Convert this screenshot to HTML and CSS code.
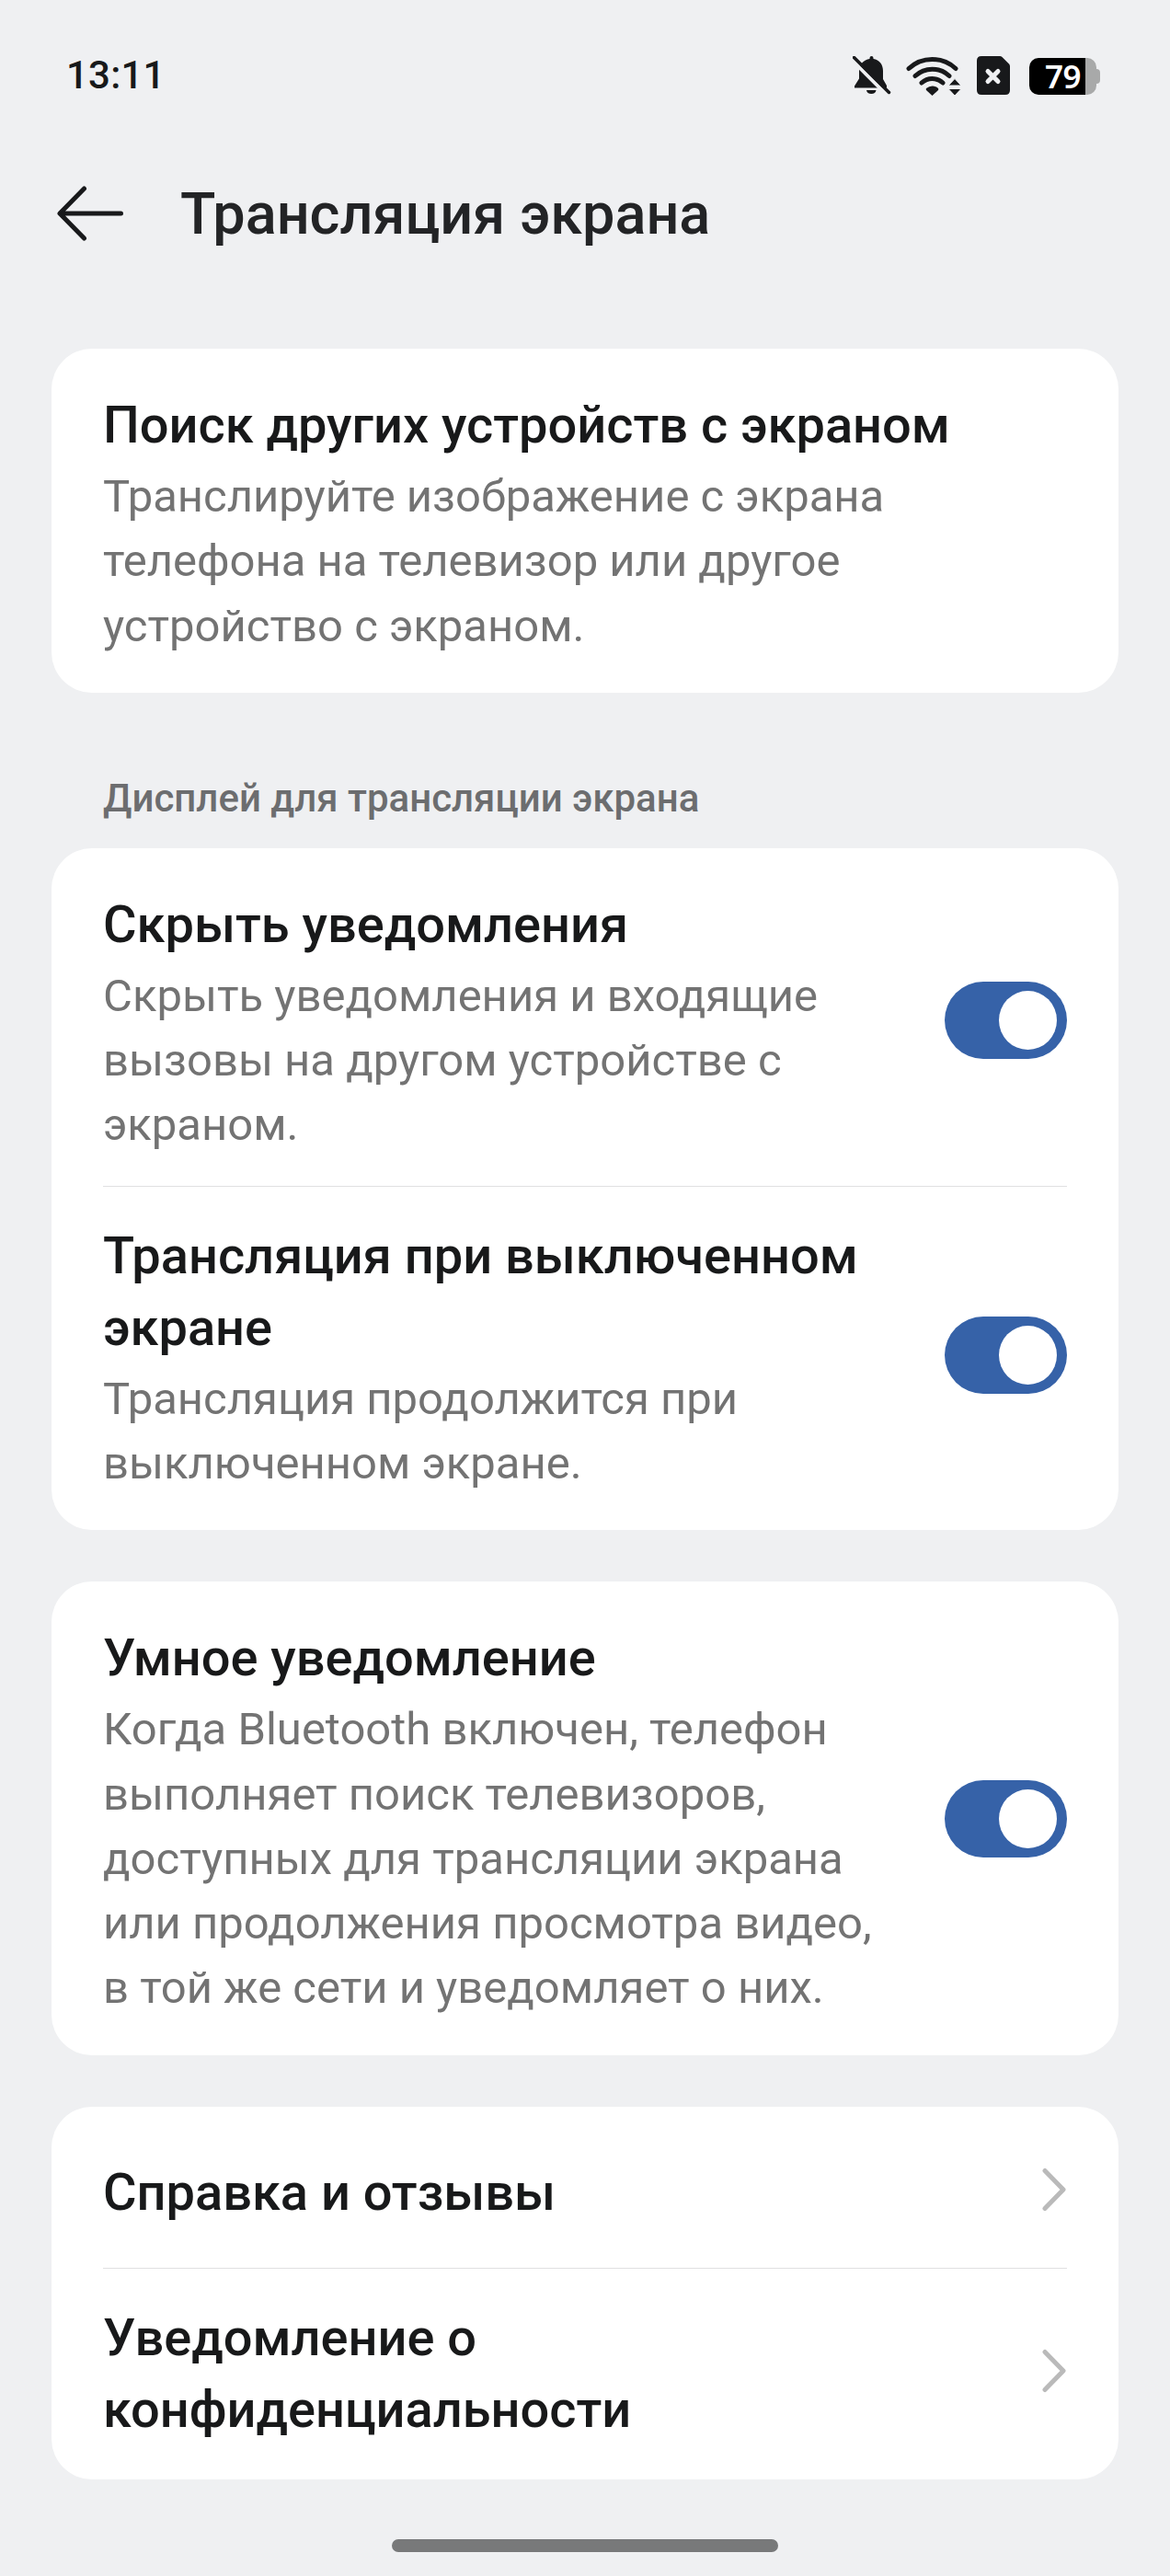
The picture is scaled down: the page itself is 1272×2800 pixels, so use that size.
FILE: index.html
```html
<!DOCTYPE html>
<html lang="ru">
<head>
    <meta charset="UTF-8">
    <title>Трансляция экрана</title>
    <link rel="stylesheet" href="styles.css">
</head>
<body>
    <div class="status-bar">
        <span class="time">13:11</span>
        <div class="status-icons">
            <svg class="icon-bell" width="42" height="42" viewBox="0 0 42 42">
                <path d="M18.500 3V2a1.500 1.500 0 0 1 4 0v1C29 4 33 9 33 16v9l4 7v2.500H2v-2l5-8v-8C7 9 12 4 18.500 3z" fill="#18191b"/>
                <path d="M15 37h10.500a5.300 4.500 0 0 1-10.500 0z" fill="#18191b"/>
                <path d="M-3 2L37 42" stroke="#eff0f2" stroke-width="4"/>
                <path d="M1.500 1.500L39.500 39.500" stroke="#18191b" stroke-width="3.500" stroke-linecap="round"/>
            </svg>
            <svg class="icon-wifi" width="60" height="43" viewBox="0 0 60 43">
                <g fill="none" stroke="#18191b" stroke-width="5" stroke-linecap="round">
                    <path d="M3 13.500a37.500 37.500 0 0 1 51 0"/>
                    <path d="M10 21.500a27 27 0 0 1 37 0"/>
                    <path d="M17 29a17 17 0 0 1 23 0"/>
                </g>
                <path d="M22 35q6.500-5 13 0q.500 1 0 2l-6.500 6l-6.500-6q-.500-1 0-2z" fill="#18191b"/>
                <path d="M53 24.500l7 7.500H46zM53 43l-7-7.500h14z" fill="#18191b" stroke="#eff0f2" stroke-width="1"/>
            </svg>
            <svg class="icon-sim" width="36" height="42" viewBox="0 0 36 42">
                <path d="M5 0h20q1.500 0 2.500 1l7.500 7.500q1 1 1 2.500v26q0 5-5 5H5q-5 0-5-5V5q0-5 5-5z" fill="#18191b"/>
                <path d="M12 16.500l11 11M23 16.500l-11 11" stroke="#eff0f2" stroke-width="5" stroke-linecap="round"/>
            </svg>
            <div class="battery">
                <span class="battery-level">79</span>
                <span class="battery-cap"></span>
            </div>
        </div>
    </div>

    <div class="header">
        <svg class="back-arrow" width="72" height="60" viewBox="0 0 72 60">
            <path d="M69.500 30H4M29.500 3L3 30l26.500 27" fill="none" stroke="#18191b" stroke-width="5" stroke-linecap="round" stroke-linejoin="round"/>
        </svg>
        <h1>Трансляция экрана</h1>
    </div>

    <div class="card">
        <div class="item item-last">
            <div class="item-text">
                <h2>Поиск других устройств с экраном</h2>
                <p>Транслируйте изображение с экрана<br>телефона на телевизор или другое<br>устройство с экраном.</p>
            </div>
        </div>
    </div>

    <div class="section-title">Дисплей для трансляции экрана</div>

    <div class="card">
        <div class="item">
            <div class="item-text">
                <h2>Скрыть уведомления</h2>
                <p>Скрыть уведомления и входящие<br>вызовы на другом устройстве с<br>экраном.</p>
            </div>
            <div class="toggle"><span class="knob"></span></div>
        </div>
        <div class="item item-last">
            <div class="item-text">
                <h2>Трансляция при выключенном<br>экране</h2>
                <p>Трансляция продолжится при<br>выключенном экране.</p>
            </div>
            <div class="toggle"><span class="knob"></span></div>
        </div>
    </div>

    <div class="card">
        <div class="item item-last">
            <div class="item-text">
                <h2>Умное уведомление</h2>
                <p>Когда Bluetooth включен, телефон<br>выполняет поиск телевизоров,<br>доступных для трансляции экрана<br>или продолжения просмотра видео,<br>в той же сети и уведомляет о них.</p>
            </div>
            <div class="toggle"><span class="knob"></span></div>
        </div>
    </div>

    <div class="card">
        <div class="item link-item">
            <h2>Справка и отзывы</h2>
            <svg class="chevron" width="26" height="48" viewBox="0 0 26 48">
                <path d="M3 3.500l20 20.500L3 44.500" fill="none" stroke="#bababa" stroke-width="5" stroke-linecap="round" stroke-linejoin="round"/>
            </svg>
        </div>
        <div class="item link-item item-last">
            <h2>Уведомление о<br>конфиденциальности</h2>
            <svg class="chevron" width="26" height="48" viewBox="0 0 26 48">
                <path d="M3 3.500l20 20.500L3 44.500" fill="none" stroke="#bababa" stroke-width="5" stroke-linecap="round" stroke-linejoin="round"/>
            </svg>
        </div>
    </div>

    <div class="home-bar"></div>
</body>
</html>
```
FILE: styles.css
```css
* {
    margin: 0;
    padding: 0;
    box-sizing: border-box;
}

body {
    background-color: #eff0f2;
    font-family: Roboto, sans-serif;
    color: #18191a;
    height: 2800px;
    overflow: hidden;
}

.status-bar {
    display: flex;
    justify-content: space-between;
    align-items: flex-start;
    height: 160px;
    padding: 57px 76px 0 72px;
}

.time {
    font-size: 42px;
    line-height: 50px;
    font-weight: 500;
    letter-spacing: 0.2px;
}

.status-icons {
    display: flex;
    align-items: flex-start;
    padding-top: 4px;
}

.icon-bell {
    margin-right: 16px;
}

.icon-wifi {
    margin-right: 17px;
}

.icon-sim {
    margin-right: 21px;
}

.battery {
    display: flex;
    align-items: center;
    margin-top: 2px;
}

.battery-level {
    width: 73px;
    height: 40px;
    border-radius: 10px;
    background: linear-gradient(to right, #000 61px, #a8a9a9 61px);
    color: #fff;
    font-family: "Noto Sans", sans-serif;
    font-size: 35px;
    font-weight: 600;
    line-height: 40px;
    letter-spacing: -0.5px;
    padding-left: 17px;
}

.battery-cap {
    width: 4px;
    height: 16px;
    border-radius: 0 4px 4px 0;
    background-color: #a8a9a9;
}

.header {
    display: flex;
    align-items: center;
    height: 144px;
    padding-left: 62px;
    margin-bottom: 75px;
}

.header h1 {
    margin-left: 62px;
    padding-top: 2px;
    font-size: 63px;
    font-weight: 500;
    line-height: 80px;
    color: #232426;
}

.card {
    margin: 0 56px 56px;
    padding: 0 56px;
    background-color: #fff;
    border-radius: 44px;
}

.item {
    display: flex;
    justify-content: space-between;
    align-items: center;
    padding: 44px 0 30.1px;
    border-bottom: 1px solid #e0e0e1;
}

.item-last {
    border-bottom: none;
    padding-bottom: 36.9px;
}

.item + .item {
    padding-top: 36px;
}

.item h2 {
    font-size: 56px;
    font-weight: 500;
    line-height: 78.4px;
    letter-spacing: -0.02px;
}

.item p {
    margin-top: 3.5px;
    font-size: 49px;
    line-height: 70.3px;
    color: #737373;
}

.section-title {
    padding: 34px 112px 29px;
    font-size: 42px;
    font-weight: 500;
    line-height: 50px;
    color: #6c6d6f;
}

.toggle {
    flex: none;
    width: 133px;
    height: 84px;
    margin-bottom: 7px;
    padding: 10px 11px;
    border-radius: 42px;
    background-color: #3662a8;
    display: flex;
    justify-content: flex-end;
}

.knob {
    width: 63px;
    height: 64px;
    border-radius: 50%;
    background-color: #fff;
}

.link-item {
    padding: 54px 0 42.5px;
}

.link-item.item-last {
    padding-bottom: 37px;
}

.chevron {
    margin-right: 1px;
    margin-bottom: 6px;
}

.home-bar {
    width: 420px;
    height: 14px;
    margin: 65px auto 0;
    border-radius: 7px;
    background-color: #78797a;
}
```
